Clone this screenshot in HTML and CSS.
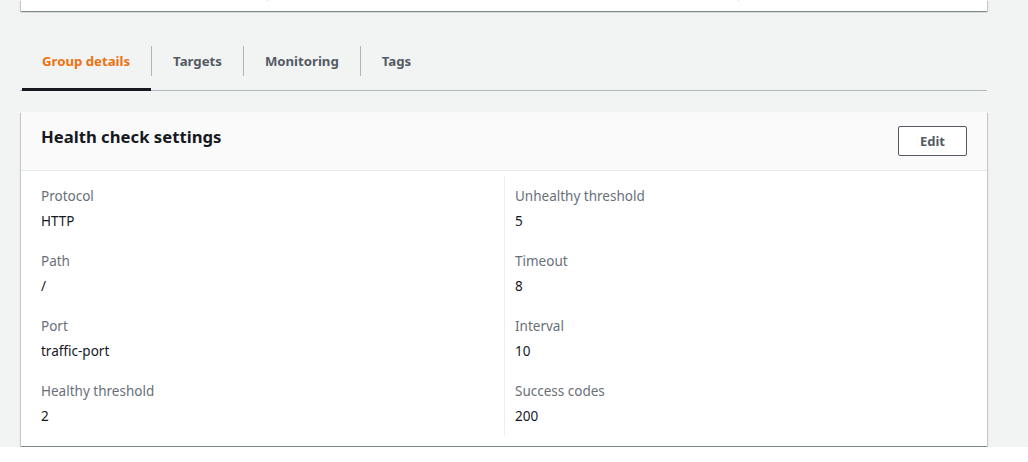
FILE: index.html
```html
<!DOCTYPE html>
<html lang="en">
<head>
<meta charset="utf-8">
<title>Target group</title>
<link rel="stylesheet" href="styles.css">
</head>
<body>
<div class="page">
  <div class="summary">
    <div class="summary-row">
      <div class="summary-col"></div>
      <div class="summary-col"></div>
      <div class="summary-col"></div>
    </div>
  </div>

  <div class="tabs">
    <div class="tab active"><span class="tab-label">Group details</span></div>
    <div class="tab"><span class="tab-label">Targets</span></div>
    <div class="tab"><span class="tab-label">Monitoring</span></div>
    <div class="tab"><span class="tab-label">Tags</span></div>
  </div>

  <section class="card">
    <header class="card-header">
      <h2 class="card-title">Health check settings</h2>
      <button class="btn">Edit</button>
    </header>
    <div class="card-body">
      <div class="col">
        <div class="kv"><div class="k">Protocol</div><div class="v">HTTP</div></div>
        <div class="kv"><div class="k">Path</div><div class="v">/</div></div>
        <div class="kv"><div class="k">Port</div><div class="v">traffic-port</div></div>
        <div class="kv"><div class="k">Healthy threshold</div><div class="v">2</div></div>
      </div>
      <div class="col col-right">
        <div class="kv"><div class="k">Unhealthy threshold</div><div class="v">5</div></div>
        <div class="kv"><div class="k">Timeout</div><div class="v">8</div></div>
        <div class="kv"><div class="k">Interval</div><div class="v">10</div></div>
        <div class="kv"><div class="k">Success codes</div><div class="v">200</div></div>
      </div>
    </div>
  </section>
</div>
</body>
</html>
```
FILE: styles.css
```css
html, body {
  margin: 0;
  padding: 0;
  background: #ffffff;
}
body {
  font-family: "Noto Sans", "Open Sans", sans-serif;
  color: #16191f;
}
.page {
  background: #f2f3f3;
  height: 447px;
  padding: 0 41px 0 21px;
  box-sizing: border-box;
  overflow: hidden;
}
.summary {
  height: 11px;
  padding-bottom: 0;
  box-sizing: border-box;
  background: #ffffff;
  box-shadow: 0 1px 1px 0 rgba(0, 28, 36, 0.3), 1px 1px 1px 0 rgba(0, 28, 36, 0.15), -1px 1px 1px 0 rgba(0, 28, 36, 0.15);
}
.summary-row {
  display: grid;
  grid-template-columns: 246px 471px 1fr;
  height: 1px;
}
.summary-col + .summary-col {
  border-left: 1px solid #d5dbdb;
}
.tabs {
  display: flex;
  margin-top: 25px;
  height: 54px;
  border-bottom: 1px solid #aab7b8;
  margin-left: -1px;
}
.tab {
  position: relative;
  padding-top: 10px;
  box-sizing: border-box;
  height: 54px;
  font-size: 13.2px;
  font-weight: 700;
  color: #545b64;
}
.tab:first-child {
  margin-left: 2px;
}
.tab-label {
  display: block;
  line-height: 30px;
  padding: 0 21px;
  border-left: 1px solid #aab7b8;
  white-space: nowrap;
}
.tab:first-child .tab-label {
  border-left: none;
  padding: 0 21px 0 20px;
}
.tab.active {
  color: #ec7211;
}
.tab.active::after {
  content: "";
  position: absolute;
  left: 0;
  right: 0;
  bottom: -1px;
  height: 3px;
  background: #16191f;
}
.card {
  margin-top: 21px;
  background: #ffffff;
  box-shadow: 0 1px 1px 0 rgba(0, 28, 36, 0.3), 1px 1px 1px 0 rgba(0, 28, 36, 0.15), -1px 1px 1px 0 rgba(0, 28, 36, 0.15);
}
.card-header {
  display: flex;
  justify-content: space-between;
  align-items: flex-start;
  padding: 14px 20px 14px 20px;
  background: #fafafa;
  border-bottom: 1px solid #eaeded;
}
.card-title {
  margin: 0;
  font-size: 16.7px;
  line-height: 22px;
  font-weight: 700;
  color: #16191f;
}
.btn {
  font-family: inherit;
  font-size: 13px;
  font-weight: 700;
  color: #545b64;
  background: #ffffff;
  border: 1px solid #545b64;
  border-radius: 2px;
  width: 69px;
  height: 30px;
  padding: 0;
  cursor: pointer;
}
.card-body {
  display: grid;
  grid-template-columns: 1fr 1fr;
  padding: 5px 20px 10px 20px;
}
.col-right {
  border-left: 1px solid #eaeded;
  padding-left: 10px;
}
.kv {
  padding: 10px 0;
}
.k {
  font-size: 13.5px;
  line-height: 20px;
  color: #687078;
  margin-bottom: 5px;
}
.v {
  font-size: 13.5px;
  line-height: 20px;
  color: #16191f;
}
```
